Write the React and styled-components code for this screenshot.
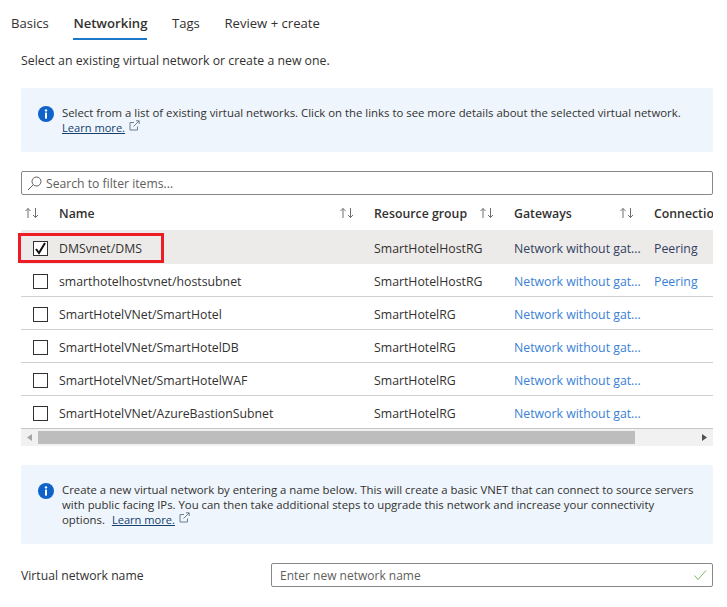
import React from 'react';
import styled, {createGlobalStyle} from 'styled-components';

const GlobalStyle = createGlobalStyle`
html, body {
    margin: 0;
    padding: 0;
    background: #fff;
}
body {
    font-family: "Open Sans", "Liberation Sans", sans-serif;
    font-size: 12.3px;
    color: #323130;
}
`;

const Page = styled.div`
width: 727px;
height: 607px;
overflow: hidden;
box-sizing: border-box;
`;
const Tabs = styled.div`
display: flex;
height: 40px;
padding: 0 0 0 11px;
box-sizing: border-box;
align-items: stretch;
gap: 24.6px;
`;
const Tab = styled.div`
display: flex;
align-items: center;
height: 40px;
box-sizing: border-box;
padding-top: 7px;
font-size: 13.1px;
font-weight: ${(props) => props.$active ? 600 : 400};
border-bottom: 2px solid ${(props) => props.$active ? '#1b78c9' : 'transparent'};
`;
const Content = styled.div`
padding: 0 14px 0 21px;
`;
const Intro = styled.div`
height: 48px;
padding-top: 12px;
box-sizing: border-box;
`;
const InfoBox = styled.div`
display: flex;
gap: 8px;
height: ${(props) => props.$height}px;
padding: ${(props) => props.$top}px 10px 0 17px;
box-sizing: border-box;
background: #eef5fc;
border-radius: 2px;
line-height: 15px;
font-size: 11.37px;
white-space: nowrap;
`;
const InfoIcon = styled.svg`
flex: none;
width: 16px;
height: 16px;
margin-top: 1px;
`;
const LearnMore = styled.a`
color: #14406e;
font-size: 11.1px;
text-decoration: underline;
margin-left: ${(props) => props.$gap || 0}px;
margin-right: 4px;
`;
const ExtIcon = styled.svg`
width: 11px;
height: 11px;
vertical-align: 1px;
`;
const Search = styled.div`
display: flex;
align-items: center;
gap: 4px;
height: 24px;
margin-top: 19px;
padding-left: 5px;
box-sizing: border-box;
border: 1px solid #8a8886;
border-radius: 2px;
color: #605e5c;
font-size: 12.2px;
`;
const SearchIcon = styled.svg`
width: 15px;
height: 15px;
`;
const Table = styled.div`
position: relative;
margin-top: 6px;
`;
const Row = styled.div`
display: grid;
grid-template-columns: 38px 315px 140px 140px 200px;
height: ${(props) => props.$selected ? 34 : 33}px;
padding-top: ${(props) => props.$selected ? 4 : 3}px;
align-items: center;
overflow: hidden;
box-sizing: border-box;
background: ${(props) => props.$selected ? '#edebe9' : '#fff'};
border-bottom: 1px solid ${(props) => props.$last ? '#c8c6c4' : props.$selected ? '#edebe9' : '#d2d0ce'};
`;
const HeadRow = styled(Row)`
height: 29px;
padding: 0 0 5px;
border-bottom: none;
font-weight: 600;
`;
const HeadCell = styled.div`
display: flex;
align-items: center;
justify-content: space-between;
padding-right: 19px;
white-space: nowrap;
`;
const SortCorner = styled.div`
padding-left: 3px;
display: flex;
`;
const SortIcon = styled.svg`
width: 16px;
height: 12px;
`;
const CheckCell = styled.div`
padding-left: 12px;
display: flex;
`;
const Box = styled.div`
width: 15px;
height: 15px;
box-sizing: border-box;
border: 1px solid #323130;
background: #fff;
display: flex;
align-items: center;
justify-content: center;
`;
const Cell = styled.div`
white-space: nowrap;
overflow: hidden;
`;
const LinkCell = styled(Cell)`
color: ${(props) => props.$selected ? '#31415f' : '#3a7fd5'};
`;
const Highlight = styled.div`
position: absolute;
left: -3px;
top: 32px;
width: 146px;
height: 30px;
box-sizing: border-box;
border: 3px solid #ed1c24;
`;
const Scrollbar = styled.div`
display: flex;
align-items: center;
height: 17px;
background: #f1f1f1;
`;
const ScrollArrow = styled.div`
width: 17px;
display: flex;
justify-content: center;
flex: none;
`;
const Thumb = styled.div`
height: 13px;
width: 597px;
background: #bdbdbd;
`;
const Spacer = styled.div`
flex: 1;
`;
const SecondInfo = styled.div`
margin-top: 19px;
`;
const NameRow = styled.div`
display: flex;
align-items: center;
margin-top: 19px;
font-size: 12.2px;
`;
const NameLabel = styled.div`
width: 250px;
`;
const NameInput = styled.div`
flex: 1;
display: flex;
align-items: center;
justify-content: space-between;
height: 24px;
padding: 0 5px 0 8px;
box-sizing: border-box;
border: 1px solid #8a8886;
border-radius: 2px;
color: #605e5c;
font-size: 12px;
`;

const rows = [
    {name: 'DMSvnet/DMS', group: 'SmartHotelHostRG', peering: true, selected: true},
    {name: 'smarthotelhostvnet/hostsubnet', group: 'SmartHotelHostRG', peering: true},
    {name: 'SmartHotelVNet/SmartHotel', group: 'SmartHotelRG'},
    {name: 'SmartHotelVNet/SmartHotelDB', group: 'SmartHotelRG'},
    {name: 'SmartHotelVNet/SmartHotelWAF', group: 'SmartHotelRG'},
    {name: 'SmartHotelVNet/AzureBastionSubnet', group: 'SmartHotelRG'},
];

function Info() {
    return (
        <InfoIcon viewBox="0 0 16 16">
            <circle cx="8" cy="8" r="8" fill="#0f62c9" />
            <circle cx="8" cy="4.4" r="1.2" fill="#fff" />
            <rect x="7" y="6.6" width="2" height="6" fill="#fff" />
        </InfoIcon>
    );
}

function External() {
    return (
        <ExtIcon viewBox="0 0 11 11" fill="none" stroke="#5f6f86" strokeWidth="0.9">
            <path d="M5 2.5H1v7.5h7.5V6.5" />
            <path d="M4.5 6.5L10 1M7 .8h3.2V4" />
        </ExtIcon>
    );
}

function Sort() {
    return (
        <SortIcon viewBox="0 0 16 12" fill="none" stroke="#605e5c" strokeWidth="0.9">
            <path d="M4 11V1.5M1.5 4L4 1.5 6.5 4" />
            <path d="M11.5 1v9.5M9 8l2.5 2.5L14 8" />
        </SortIcon>
    );
}

export default function App() {
    return (
        <Page>
            <GlobalStyle />
            <Tabs>
                <Tab>Basics</Tab>
                <Tab $active>Networking</Tab>
                <Tab>Tags</Tab>
                <Tab>Review + create</Tab>
            </Tabs>
            <Content>
                <Intro>Select an existing virtual network or create a new one.</Intro>
                <InfoBox $height={64} $top={17}>
                    <Info />
                    <div>
                        Select from a list of existing virtual networks. Click on the links to see more details about the selected virtual network.<br />
                        <LearnMore>Learn more.</LearnMore><External />
                    </div>
                </InfoBox>
                <Search>
                    <SearchIcon viewBox="0 0 15 15" fill="none" stroke="#605e5c" strokeWidth="1">
                        <circle cx="9.5" cy="5.5" r="4.5" />
                        <path d="M6.2 8.8L1 14" />
                    </SearchIcon>
                    Search to filter items...
                </Search>
                <Table>
                    <HeadRow>
                        <SortCorner><Sort /></SortCorner>
                        <HeadCell>Name<Sort /></HeadCell>
                        <HeadCell>Resource group<Sort /></HeadCell>
                        <HeadCell>Gateways<Sort /></HeadCell>
                        <HeadCell>Connection type</HeadCell>
                    </HeadRow>
                    {rows.map((row, i) => (
                        <Row key={row.name} $selected={row.selected} $last={i === rows.length - 1}>
                            <CheckCell>
                                <Box>
                                    {row.selected && (
                                        <svg width="13" height="13" viewBox="0 0 13 13" fill="none" stroke="#111" strokeWidth="2">
                                            <path d="M2 7l3 4 6-10" />
                                        </svg>
                                    )}
                                </Box>
                            </CheckCell>
                            <Cell>{row.name}</Cell>
                            <Cell>{row.group}</Cell>
                            <LinkCell $selected={row.selected}>Network without gat...</LinkCell>
                            <LinkCell $selected={row.selected}>{row.peering ? 'Peering' : ''}</LinkCell>
                        </Row>
                    ))}
                    <Highlight />
                </Table>
                <Scrollbar>
                    <ScrollArrow>
                        <svg width="5" height="7" viewBox="0 0 5 7"><path d="M5 0v7L0 3.5z" fill="#a6a6a6" /></svg>
                    </ScrollArrow>
                    <Thumb />
                    <Spacer />
                    <ScrollArrow>
                        <svg width="5" height="7" viewBox="0 0 5 7"><path d="M0 0v7l5-3.5z" fill="#505050" /></svg>
                    </ScrollArrow>
                </Scrollbar>
                <SecondInfo>
                    <InfoBox $height={79} $top={17}>
                        <Info />
                        <div>
                            Create a new virtual network by entering a name below. This will create a basic VNET that can connect to source servers<br />
                            with public facing IPs. You can then take additional steps to upgrade this network and increase your connectivity<br />
                            options.<LearnMore $gap={7}>Learn more.</LearnMore><External />
                        </div>
                    </InfoBox>
                </SecondInfo>
                <NameRow>
                    <NameLabel>Virtual network name</NameLabel>
                    <NameInput>
                        Enter new network name
                        <svg width="14" height="12" viewBox="0 0 14 12" fill="none" stroke="#7fb765" strokeWidth="1">
                            <path d="M1.5 6.5L5 10.5 13 1.5" />
                        </svg>
                    </NameInput>
                </NameRow>
            </Content>
        </Page>
    );
}
